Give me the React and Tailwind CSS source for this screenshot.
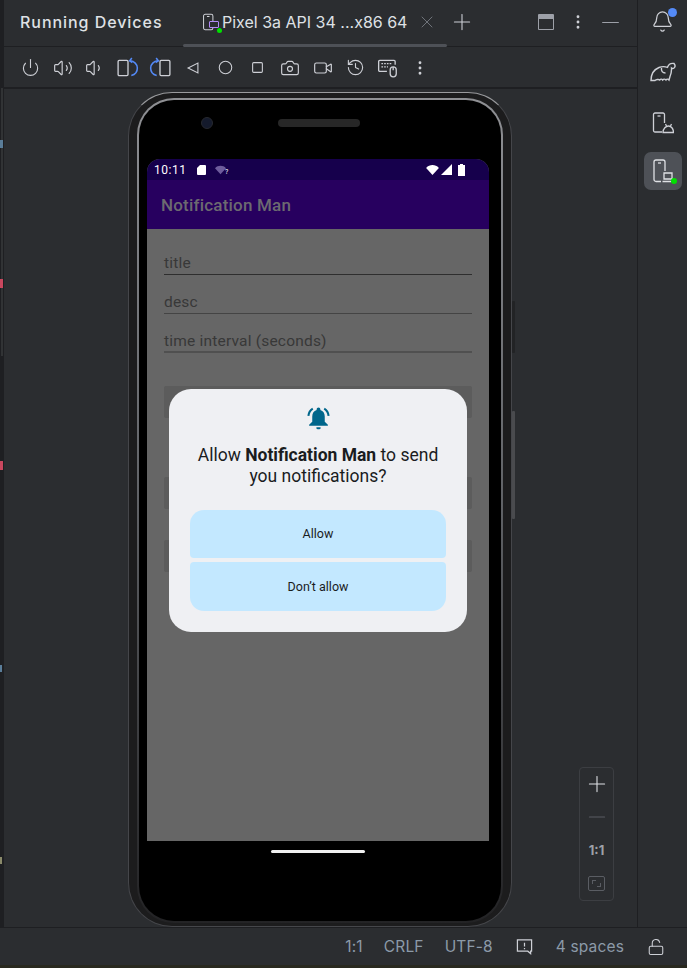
import React from "react";
import { Plus, Minus, X, MoreVertical, Circle, Square, Camera, Video, Power, Volume1, Volume2, History, Bell, LockOpen } from "lucide-react";

const font = "font-['Inter','Liberation_Sans',sans-serif]";
const roboto = "font-['Roboto','Liberation_Sans',sans-serif]";

const Ic = ({ children, className = "w-[22px] h-[22px] text-[#ced0d6]" }) => (
  <svg viewBox="0 0 20 20" fill="none" stroke="currentColor" strokeWidth="1.2" className={className}>
    {children}
  </svg>
);

const RotateRight = () => (
  <Ic>
    <rect x="1" y="3" width="9" height="14" rx="1" />
    <path d="M12 3.500c3.500.3 6.500 3 6.500 6.500s-2 6-5.500 6.800" stroke="#548af7" strokeWidth="1.4" />
    <path d="M13.500 1L11.500 3.500l2.500 1.500" stroke="#548af7" strokeWidth="1.4" />
  </Ic>
);

const RotateLeft = () => (
  <Ic>
    <rect x="10" y="3" width="9" height="14" rx="1" />
    <path d="M8 3.500C4.500 3.800 1.500 6.500 1.500 10s2 6 5.500 6.800" stroke="#548af7" strokeWidth="1.4" />
    <path d="M6.500 1L8.500 3.500L6 5" stroke="#548af7" strokeWidth="1.4" />
  </Ic>
);

const Slot = ({ children }) => <div className="w-[32.5px] flex items-center justify-center shrink-0">{children}</div>;

const Toolbar = () => (
  <div className="h-[42px] flex items-center pl-[10px] pt-[1px] border-b-2 border-[#1e1f22] shrink-0">
    <Slot><Power className="w-[19px] h-[19px] text-[#ced0d6]" strokeWidth={1.4} /></Slot>
    <Slot><Volume2 className="w-[20px] h-[20px] text-[#ced0d6]" strokeWidth={1.4} /></Slot>
    <Slot><Volume1 className="w-[20px] h-[20px] text-[#ced0d6]" strokeWidth={1.4} /></Slot>
    <Slot><RotateRight /></Slot>
    <Slot><RotateLeft /></Slot>
    <Slot>
      <Ic className="w-[14px] h-[14px] text-[#ced0d6]">
        <path d="M17 3v14L3 10z" strokeWidth="1.6" />
      </Ic>
    </Slot>
    <Slot><Circle className="w-[15px] h-[15px] text-[#ced0d6]" strokeWidth={1.7} /></Slot>
    <Slot><Square className="w-[13px] h-[13px] text-[#ced0d6]" strokeWidth={2} /></Slot>
    <Slot><Camera className="w-[20px] h-[20px] text-[#ced0d6]" strokeWidth={1.4} /></Slot>
    <Slot><Video className="w-[20px] h-[20px] text-[#ced0d6]" strokeWidth={1.4} /></Slot>
    <Slot><History className="w-[19px] h-[19px] text-[#ced0d6]" strokeWidth={1.4} /></Slot>
    <Slot>
      <Ic>
        <path d="M9 13H2.500a1 1 0 01-1-1V4a1 1 0 011-1h13a1 1 0 011 1v3" />
        <path d="M4 6h9M4 9h6" strokeDasharray="1.5 1" />
        <rect x="12" y="9" width="5.5" height="9" rx="2.7" />
        <path d="M14.700 9v3" />
      </Ic>
    </Slot>
    <Slot><MoreVertical className="w-[18px] h-[18px] text-[#ced0d6]" strokeWidth={1.8} /></Slot>
  </div>
);

const Header = () => (
  <div className="h-[47px] flex items-center pb-[2px] border-b border-[#1e1f22] shrink-0 relative">
    <span className="ml-[16px] w-[163px] text-[16px] font-medium text-[#dfe1e5] tracking-[0.95px] whitespace-nowrap">Running Devices</span>
    <div className="flex items-center h-full relative w-[264px] pl-[18px]">
      <div className="relative w-[17px] h-[18px] shrink-0">
        <Ic className="w-[17px] h-[18px] text-[#ced0d6]">
          <rect x="3" y="1" width="11" height="18" rx="2" />
          <path d="M7 3.500h3" />
        </Ic>
        <span className="absolute right-[-1px] bottom-[3px] w-[10px] h-[7px] border border-[#b189f5] rounded-[1px] bg-[#2b2d30]" />
        <span className="absolute right-[-4px] bottom-[-2px] w-[5px] h-[5px] rounded-full bg-[#00e000]" />
      </div>
      <span className="ml-[4px] text-[16px] text-[#dfe1e5] whitespace-nowrap">Pixel 3a API 34 ...x86 64</span>
      <X className="w-[20px] h-[20px] text-[#6f737a] ml-[10px] shrink-0" strokeWidth={1.2} />
      <span className="absolute left-0 bottom-[-3px] h-[3px] w-[264px] bg-[#4e5157] rounded-[2px]" />
    </div>
    <Plus className="w-[26px] h-[26px] text-[#ced0d6] ml-[2px]" strokeWidth={1} />
    <div className="ml-auto mr-[13px] flex items-center">
      <span className="w-[16px] h-[16px] rounded-[1px] border border-[#9da0a8] border-t-[5px]" />
      <MoreVertical className="w-[18px] h-[18px] text-[#ced0d6] ml-[15px]" strokeWidth={1.8} />
      <Minus className="w-[27px] h-[27px] text-[#9da0a8] ml-[10px]" strokeWidth={1} />
    </div>
  </div>
);

const StatusIcons = () => (
  <div className="flex items-center gap-[2px]">
    <svg viewBox="0 0 14 11" className="w-[13px] h-[10px] fill-white"><path d="M0 3.200C3.800-.9 10.200-.9 14 3.200L7 11z" /></svg>
    <svg viewBox="0 0 11 11" className="w-[11px] h-[11px] fill-white"><path d="M11 0v11H0z" /></svg>
    <svg viewBox="0 0 7 12" className="w-[7px] h-[12px] ml-[4px] fill-white"><path d="M2 0h3v1h2v11H0V1h2z" /></svg>
  </div>
);

const Field = ({ label, line, pad }) => (
  <div className="h-[39px] flex flex-col justify-end">
    <div className={`text-[15.5px] leading-[20px] text-[#383838] tracking-[0.2px] ${pad}`}>{label}</div>
    <div className={line} />
  </div>
);

const FormButton = ({ className = "" }) => <div className={`h-[32px] mx-[17px] bg-[#5c5c5c] rounded-[2px] ${className}`} />;

const Dialog = () => (
  <div className="absolute left-[22px] top-[230px] w-[298px] h-[243px] bg-[#eff0f3] rounded-[22px] flex flex-col items-center pt-[17px]">
    <svg viewBox="0 0 24 24" className="w-[25px] h-[25px] fill-[#00668b]">
      <path d="M12 1.500c-1 0-1.800.8-1.800 1.800v.5C7.500 4.600 6 7 6 10v5l-3 3v1h18v-1l-3-3v-5c0-3-1.500-5.400-4.200-6.200v-.5c0-1-.8-1.800-1.800-1.800z" />
      <path d="M10 20.500h4v.8c0 .6-.9 1-2 1s-2-.4-2-1z" />
      <path d="M6.500 2.500C4 4 2.600 6.500 2.300 9.500M17.500 2.500C20 4 21.400 6.500 21.700 9.500" fill="none" stroke="#00668b" strokeWidth="2" />
    </svg>
    <div className="mt-[14px] w-[250px] text-center text-[17.5px] leading-[21px] text-[#1a1c1e]">
      Allow <span className="font-bold">Notification Man</span> to send you notifications?
    </div>
    <div className="mt-[23px] w-[256px] flex flex-col gap-[4px] text-[12.5px] text-[#1a1c1e]">
      <div className="h-[48px] pt-[1px] bg-[#c3e8ff] rounded-t-[14px] rounded-b-[4px] flex items-center justify-center">Allow</div>
      <div className="h-[49px] pt-[1px] bg-[#c3e8ff] rounded-b-[14px] rounded-t-[4px] flex items-center justify-center">Don’t allow</div>
    </div>
  </div>
);

const Phone = () => (
  <div className="relative w-[384px] h-[835px] mt-[3px] ml-[124px] rounded-[44px] bg-[#1c1c1d] border border-[#45464a] border-t-[#9a9b9e] pt-[5px] px-[8px] pb-[3px]">
    <span className="absolute right-[-4px] top-[208px] w-[3px] h-[52px] bg-[#222325] rounded-[1px]" />
    <span className="absolute right-[-4px] top-[318px] w-[3px] h-[108px] bg-[#4a4b4e] rounded-[1px]" />
    <div className="h-full rounded-[37px] bg-gradient-to-b from-[#8f9094] via-[#5f6165] to-[#232325] p-[2px]">
      <div className="h-full rounded-[35px] bg-black" />
    </div>
    <div className="absolute left-[72px] top-[24px] w-[12px] h-[12px] rounded-full bg-[#141a2c] border border-[#26282e]" />
    <div className="absolute left-[149px] top-[26px] w-[82px] h-[8px] rounded-full bg-[#272727]" />
    <div className={`absolute left-[18px] top-[66px] w-[342px] ${roboto}`}>
      <div className="relative h-[682px] bg-[#666666] rounded-t-[13px] overflow-hidden">
        <div className="h-[21px] bg-[#16004c] flex items-center pl-[7px] pr-[24px] text-white text-[12px] tracking-[0.5px]">
          <span>10:11</span>
          <svg viewBox="0 0 9 10" className="ml-[11px] w-[9px] h-[10px] fill-white"><path d="M3 0h5a1 1 0 011 1v8a1 1 0 01-1 1H1a1 1 0 01-1-1V3z" /></svg>
          <div className="ml-[9px] relative w-[13px] h-[10px]">
            <svg viewBox="0 0 14 11" className="w-[11px] h-[10px] fill-[#6e5c9c]"><path d="M0 3.200C3.800-.9 10.200-.9 14 3.200L7 11z" /></svg>
            <span className="absolute right-0 bottom-[-1px] text-[7px] leading-[8px] tracking-normal">?</span>
          </div>
          <div className="ml-auto"><StatusIcons /></div>
        </div>
        <div className="h-[49px] bg-[#27005f] flex items-center pl-[14px] pt-[2px] text-[#6c6a70] text-[17px] tracking-[0.2px] font-medium">
          Notification Man
        </div>
        <div className="pt-[7px] mx-[17px] flex flex-col">
          <Field label="title" line="h-[1px] bg-[#2e2e2e]" pad="pb-[1px]" />
          <Field label="desc" line="h-[1px] bg-[#444444]" pad="pb-[1px]" />
          <Field label="time interval (seconds)" line="h-[2px] bg-[#505050]" pad="pb-0" />
        </div>
        <div className="mt-[33px] flex flex-col">
          <FormButton />
          <FormButton className="mt-[59px]" />
          <FormButton className="mt-[31px]" />
        </div>
        <Dialog />
      </div>
      <div className="mt-[9px] mx-auto w-[94px] h-[3px] rounded-full bg-[#f0f0f0]" />
    </div>
  </div>
);

const ZoomBar = () => (
  <div className="absolute left-[575px] top-[678px] w-[35px] h-[134px] rounded-[4px] border border-[#3c3e42] flex flex-col items-center pt-[3px]">
    <Plus className="w-[26px] h-[26px] text-[#dfe1e5] shrink-0" strokeWidth={1} />
    <Minus className="w-[26px] h-[26px] text-[#5a5d63] mt-[7px] shrink-0" strokeWidth={1} />
    <span className="mt-[12px] text-[13px] font-bold leading-[16px] text-[#9da0a8]">1:1</span>
    <span className="mt-[18px] w-[17px] h-[15px] rounded-[2px] border border-[#5a5d63] relative">
      <span className="absolute left-[3px] top-[3px] w-[4px] h-[4px] border-l border-t border-[#5a5d63]" />
      <span className="absolute right-[3px] bottom-[3px] w-[4px] h-[4px] border-r border-b border-[#5a5d63]" />
    </span>
  </div>
);

const RightBar = () => (
  <div className="w-[50px] border-l border-[#1e1f22] flex flex-col items-center pt-[10px] shrink-0">
    <div className="relative">
      <Bell className="w-[23px] h-[23px] text-[#ced0d6]" strokeWidth={1.3} />
      <span className="absolute right-[-3px] top-[-2px] w-[9px] h-[9px] rounded-full bg-[#548af7]" />
    </div>
    <svg viewBox="0 0 26 20" fill="none" stroke="#ced0d6" strokeWidth="1.4" className="w-[26px] h-[20px] mt-[29px] shrink-0">
      <path d="M1 18.500c0-6 3-11 8-13 3-1.200 6-1 8.500-.2 1-2.800 3.500-4.300 6.500-3.800 1.200 1.500 1.200 3.500 0 4.500-.8.6-1.800.5-2.500 0 .2 3-.5 6-1.500 8.500l-1 3.500c-1-1.200-2.300-1.200-3 0-1-1.200-2.500-1.200-3.300 0-.8-1.200-2.200-1.200-3 0-1-1-3.700-.5-4.700.5z" />
      <path d="M11.500 6c-.5 3 1 5 4 5" />
    </svg>
    <svg viewBox="0 0 22 22" fill="none" stroke="#ced0d6" strokeWidth="1.3" className="w-[22px] h-[22px] mt-[30px] shrink-0">
      <path d="M10 20H3a1.500 1.500 0 01-1.500-1.500v-16A1.500 1.500 0 013 1h8a1.500 1.500 0 011.500 1.500V11" />
      <path d="M5.500 4h3" />
      <path d="M11 20.500c0-4 3-6.500 5.500-6.500s5 2.500 5 6.500z" />
      <path d="M13.500 12l1 2M19.500 12l-1 2" />
    </svg>
    <div className="mt-[18px] w-[38px] h-[38px] rounded-[7px] bg-[#4e5157] flex items-center justify-center relative shrink-0">
      <svg viewBox="0 0 22 24" fill="none" stroke="#dfe1e5" strokeWidth="1.3" className="w-[22px] h-[24px]">
        <path d="M9 22.500H4a2 2 0 01-2-2V3a2 2 0 012-2h7a2 2 0 012 2v9" />
        <path d="M6 4h3" />
        <path d="M12 14h8v6h-8zM10.500 22.500h9" />
      </svg>
      <span className="absolute right-[5px] bottom-[6px] w-[6px] h-[6px] rounded-full bg-[#00e000]" />
    </div>
  </div>
);

const Gutter = () => (
  <div className="w-[4px] shrink-0 bg-[#1e1f22] relative">
    <span className="absolute left-[1px] top-[88px] w-[2px] h-[268px] bg-[#313335]" />
    <span className="absolute left-0 top-[140px] w-[3px] h-[8px] bg-[#5a7d99]" />
    <span className="absolute left-0 top-[279px] w-[3px] h-[9px] bg-[#c9475e]" />
    <span className="absolute left-0 top-[461px] w-[3px] h-[9px] bg-[#c9475e]" />
    <span className="absolute left-0 top-[665px] w-[2px] h-[7px] bg-[#5a7d99]" />
    <span className="absolute left-0 top-[857px] w-[2px] h-[7px] bg-[#8a8a6a]" />
  </div>
);

export default function App() {
  return (
    <div className={`w-[687px] h-[968px] bg-[#2b2d30] flex flex-col overflow-hidden ${font}`}>
      <div className="flex-1 flex min-h-0">
        <Gutter />
        <div className="flex-1 flex flex-col min-w-0">
          <Header />
          <Toolbar />
          <div className="flex-1 relative">
            <Phone />
            <ZoomBar />
          </div>
        </div>
        <RightBar />
      </div>
      <div className="h-[41px] border-t border-[#1e1f22] border-b-[3px] border-b-[#29291f] flex items-center justify-end text-[#8c9aa8] text-[15.5px] tracking-[0.15px] pr-[22px] shrink-0">
        <span>1:1</span>
        <span className="ml-[21px]">CRLF</span>
        <span className="ml-[21px]">UTF-8</span>
        <svg viewBox="0 0 18 18" fill="none" stroke="#ced0d6" strokeWidth="1.3" className="w-[17px] h-[17px] ml-[23px]">
          <path d="M1.500 2h15v12h-1v2.500l-3-2.500h-11z" />
          <path d="M9 5v4M9 10.500v1.500" />
        </svg>
        <span className="ml-[23px]">4 spaces</span>
        <LockOpen className="w-[18px] h-[18px] text-[#ced0d6] ml-[23px]" strokeWidth={1.4} />
      </div>
    </div>
  );
}
